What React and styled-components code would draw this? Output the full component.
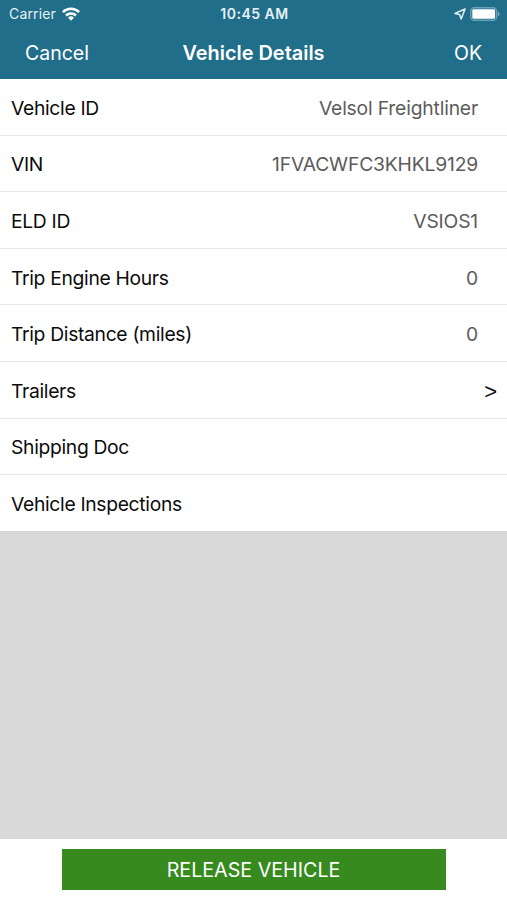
import React from "react";
import styled, { createGlobalStyle } from "styled-components";

const rows = [
  { label: "Vehicle ID", value: "Velsol Freightliner" },
  { label: "VIN", value: "1FVACWFC3KHKL9129" },
  { label: "ELD ID", value: "VSIOS1" },
  { label: "Trip Engine Hours", value: "0" },
  { label: "Trip Distance (miles)", value: "0" },
  { label: "Trailers", link: true },
  { label: "Shipping Doc" },
  { label: "Vehicle Inspections" },
];

const WifiIcon = () => (
  <svg width="18" height="14" viewBox="0 0 18 14" fill="none" stroke="#fff" strokeWidth="2.5">
    <path d="M.9 5.1a11.5 11.5 0 0 1 16.2 0" />
    <path d="M4 8.5a7.1 7.1 0 0 1 10 0" />
    <path d="M9 13.7 6.1 10.8a4.1 4.1 0 0 1 5.8 0Z" fill="#fff" stroke="none" />
  </svg>
);

const LocationIcon = () => (
  <svg width="12" height="12" viewBox="0 0 12 12" fill="none" stroke="#e4f1f5" strokeWidth="1.5" strokeLinejoin="round">
    <path d="M11 1 1 5.4l4.6 1L7.2 11Z" />
  </svg>
);

const BatteryIcon = () => (
  <svg width="30" height="14" viewBox="0 0 30 14" fill="none">
    <rect x=".7" y=".7" width="26" height="12.6" rx="3.6" stroke="#6da2b5" strokeWidth="1.4" />
    <rect x="2.3" y="2.2" width="22.8" height="9.6" rx="1.4" fill="#fff" />
    <path d="M27.9 4.6c2.4.8 2.4 4 0 4.8Z" fill="#6da2b5" />
  </svg>
);

const App = () => {
  return (
    <Screen>
      <GlobalStyle />
      <Header>
        <StatusBar>
          <Carrier>
            Carrier <WifiIcon />
          </Carrier>
          <Clock>10:45 AM</Clock>
          <Indicators>
            <LocationIcon />
            <BatteryIcon />
          </Indicators>
        </StatusBar>
        <NavBar>
          <NavButton>Cancel</NavButton>
          <Title>Vehicle Details</Title>
          <NavButton $right>OK</NavButton>
        </NavBar>
      </Header>
      <List>
        {rows.map(({ label, value, link }) => (
          <Row key={label}>
            <Label>{label}</Label>
            {value && <Value>{value}</Value>}
            {link && <Arrow>&gt;</Arrow>}
          </Row>
        ))}
      </List>
      <Filler />
      <Footer>
        <ReleaseButton>RELEASE VEHICLE</ReleaseButton>
      </Footer>
    </Screen>
  );
};

const GlobalStyle = createGlobalStyle`
  * {
    box-sizing: border-box;
  }

  body {
    margin: 0;
    font-family: Inter, "Liberation Sans", sans-serif;
  }
`;

const Screen = styled.div`
  display: flex;
  flex-direction: column;
  height: 900px;
  background: #fff;
`;

const Header = styled.header`
  height: 79px;
  background: #216e8b;
  color: #fff;
`;

const StatusBar = styled.div`
  display: grid;
  grid-template-columns: 1fr auto 1fr;
  align-items: center;
  height: 27px;
  padding: 0 7px 0 9px;
  font-size: 14px;
`;

const Carrier = styled.div`
  display: flex;
  align-items: center;
  gap: 6px;
  color: #e4f1f5;
  letter-spacing: 0.15px;
`;

const Clock = styled.div`
  font-weight: 600;
  letter-spacing: 0.5px;
  color: #e4f1f5;
`;

const Indicators = styled.div`
  display: flex;
  align-items: center;
  justify-content: flex-end;
  gap: 4px;
`;

const NavBar = styled.nav`
  display: grid;
  grid-template-columns: 1fr auto 1fr;
  align-items: center;
  height: 51px;
  padding: 0 25px;
`;

const NavButton = styled.button`
  justify-self: ${({ $right }) => ($right ? "end" : "start")};
  padding: 0;
  border: 0;
  background: none;
  color: inherit;
  font: inherit;
  font-size: 19.5px;
`;

const Title = styled.h1`
  margin: 0;
  font-size: 19.9px;
  font-weight: 600;
`;

const List = styled.div`
  flex: none;
  height: 452px;
`;

const Row = styled.div`
  display: flex;
  align-items: center;
  justify-content: space-between;
  height: 56.6px;
  padding: 2px 11px 0;
  border-bottom: 1px solid #e9e9e9;
  color: #0c0c0c;
  font-size: 19.3px;

  &:last-child {
    height: 55.8px;
    border-bottom: 0;
  }
`;

const Label = styled.span`
  letter-spacing: -0.32px;
`;

const Value = styled.span`
  margin-right: 18px;
  color: #5c5c5c;
  letter-spacing: -0.18px;
`;

const Arrow = styled.span`
  margin-right: -1px;
  padding-top: 2px;
  font-family: "Liberation Sans", sans-serif;
  font-size: 22px;
`;

const Filler = styled.div`
  flex: 1;
  background: #d9d9d9;
`;

const Footer = styled.footer`
  display: flex;
  justify-content: center;
  height: 61px;
  padding-top: 10px;
`;

const ReleaseButton = styled.button`
  width: 384px;
  height: 41px;
  padding-top: 1px;
  border: 0;
  background: #368a1e;
  color: #fff;
  font: inherit;
  font-size: 19.7px;
`;

export default App;
